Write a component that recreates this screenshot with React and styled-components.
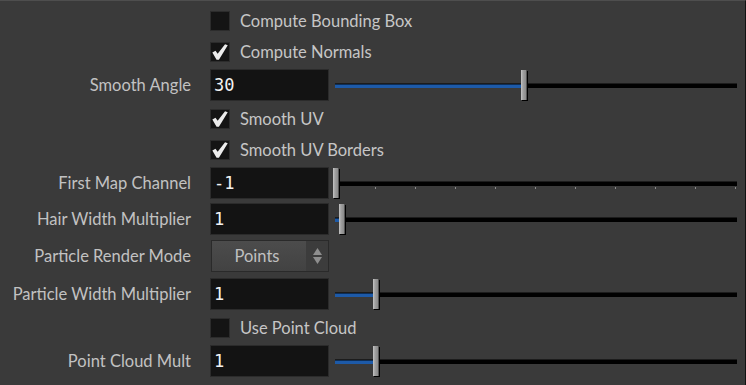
import React from 'react';
import styled, { createGlobalStyle } from 'styled-components';

const GlobalStyle = createGlobalStyle`
  html, body {
    margin: 0;
    padding: 0;
    background: #3a3a3a;
  }
  body {
    font-family: Lato, "Noto Sans", sans-serif;
  }
`;

const Panel = styled.div`
  width: 746px;
  height: 385px;
  box-sizing: border-box;
  background: #3a3a3a;
  border-top: 1px solid #4e4e4e;
  border-right: 1px solid #121212;
  padding: 4px 8px 0 0;
  display: flex;
  flex-direction: column;
  overflow: hidden;
`;

const Row = styled.div`
  display: grid;
  grid-template-columns: 191px 1fr;
  column-gap: 19px;
  align-items: center;
  height: ${(p) => p.h}px;
`;

const Label = styled.div`
  text-align: right;
  color: #c2c2c2;
  font-size: 16.5px;
  white-space: nowrap;
`;

const Controls = styled.div`
  display: flex;
  align-items: center;
  gap: 6px;
`;

const Toggle = styled.div`
  display: flex;
  align-items: center;
  gap: 10px;
  color: #c6c6c6;
  font-size: 16.5px;
`;

const Box = styled.div`
  width: 20px;
  height: 20px;
  box-sizing: border-box;
  background: #141414;
  border: 1px solid #2c2c2c;
  display: flex;
  align-items: center;
  justify-content: center;
`;

const Field = styled.div`
  width: 119px;
  height: 32px;
  box-sizing: border-box;
  flex: none;
  background: #131313;
  border: 1px solid #2b2b2b;
  padding-left: 3px;
  display: flex;
  align-items: center;
  color: #f2f2f2;
  font-family: "DejaVu Sans Mono", monospace;
  font-size: 17px;
`;

const Slider = styled.div`
  flex: 1;
  position: relative;
  height: 30px;
  display: flex;
  align-items: center;
`;

const Track = styled.div`
  position: relative;
  width: 100%;
  height: 5px;
  box-sizing: border-box;
  background: #000;
  border-top: 1px solid #1c1c1c;
`;

const Fill = styled.div`
  position: absolute;
  left: 0;
  top: 0;
  height: 3px;
  background: #1d5aa8;
  border-top: 1px solid #0d2e57;
`;

const Handle = styled.div`
  position: absolute;
  top: 0;
  width: 6px;
  height: 30px;
  box-sizing: border-box;
  background: linear-gradient(90deg, #b0b0b0 0%, #9c9c9c 40%, #8a8a8a 100%);
  border-left: 1px solid #bcbcbc;
  border-right: 1px solid #555;
  box-shadow: 1px 1px 0 #000;
`;

const Tick = styled.div`
  position: absolute;
  top: 19px;
  width: 1px;
  height: 2px;
  background: #8c8c8c;
`;

const Menu = styled.div`
  width: 118px;
  height: 32px;
  margin-left: 1px;
  box-sizing: border-box;
  display: flex;
  border: 1px solid #2a2a2a;
  background: linear-gradient(#4c4c4c, #424242);
  color: #c0c0c0;
  font-size: 16.5px;
`;

const MenuText = styled.div`
  flex: 1;
  display: flex;
  align-items: center;
  justify-content: center;
  padding-right: 4px;
`;

const MenuArrows = styled.div`
  width: 22px;
  background: #3c3c3c;
  display: flex;
  align-items: center;
  justify-content: center;
`;

const Check = () => (
  <svg width="18" height="18" viewBox="0 0 20 20">
    <path d="M1.5 10.5 L5 8.6 L7.4 12 L15.6 1.4 L18.6 2.4 L8.8 18.6 L6.2 18.6 Z" fill="#ececec" />
  </svg>
);

const CheckRow = ({ h, label, checked }) => (
  <Row h={h}>
    <span />
    <Toggle>
      <Box>{checked && <Check />}</Box>
      {label}
    </Toggle>
  </Row>
);

const SliderRow = ({ h, label, value, pos, ticks }) => (
  <Row h={h}>
    <Label>{label}</Label>
    <Controls>
      <Field>{value}</Field>
      <Slider>
        <Track>
          <Fill style={{ width: Math.max(pos, 0) }} />
        </Track>
        {ticks &&
          Array.from({ length: 11 }, (_, i) => <Tick key={i} style={{ left: i * 40 }} />)}
        <Handle style={{ left: pos }} />
      </Slider>
    </Controls>
  </Row>
);

const App = () => (
  <>
    <GlobalStyle />
    <Panel>
      <CheckRow h={32} label="Compute Bounding Box" />
      <CheckRow h={30} label="Compute Normals" checked />
      <SliderRow h={36} label="Smooth Angle" value="30" pos={186} />
      <CheckRow h={32} label="Smooth UV" checked />
      <CheckRow h={30} label="Smooth UV Borders" checked />
      <SliderRow h={36} label="First Map Channel" value="-1" pos={-2} ticks />
      <SliderRow h={36} label="Hair Width Multiplier" value="1" pos={4} />
      <Row h={38}>
        <Label>Particle Render Mode</Label>
        <Controls>
          <Menu>
            <MenuText>Points</MenuText>
            <MenuArrows>
              <svg width="9" height="16" viewBox="0 0 9 16">
                <path d="M4.5 0 L9 7 L0 7 Z" fill="#8e8e8e" />
                <path d="M0 9 L9 9 L4.5 16 Z" fill="#8e8e8e" />
              </svg>
            </MenuArrows>
          </Menu>
        </Controls>
      </Row>
      <SliderRow h={38} label="Particle Width Multiplier" value="1" pos={38} />
      <CheckRow h={30} label="Use Point Cloud" />
      <SliderRow h={36} label="Point Cloud Mult" value="1" pos={38} />
    </Panel>
  </>
);

export default App;
